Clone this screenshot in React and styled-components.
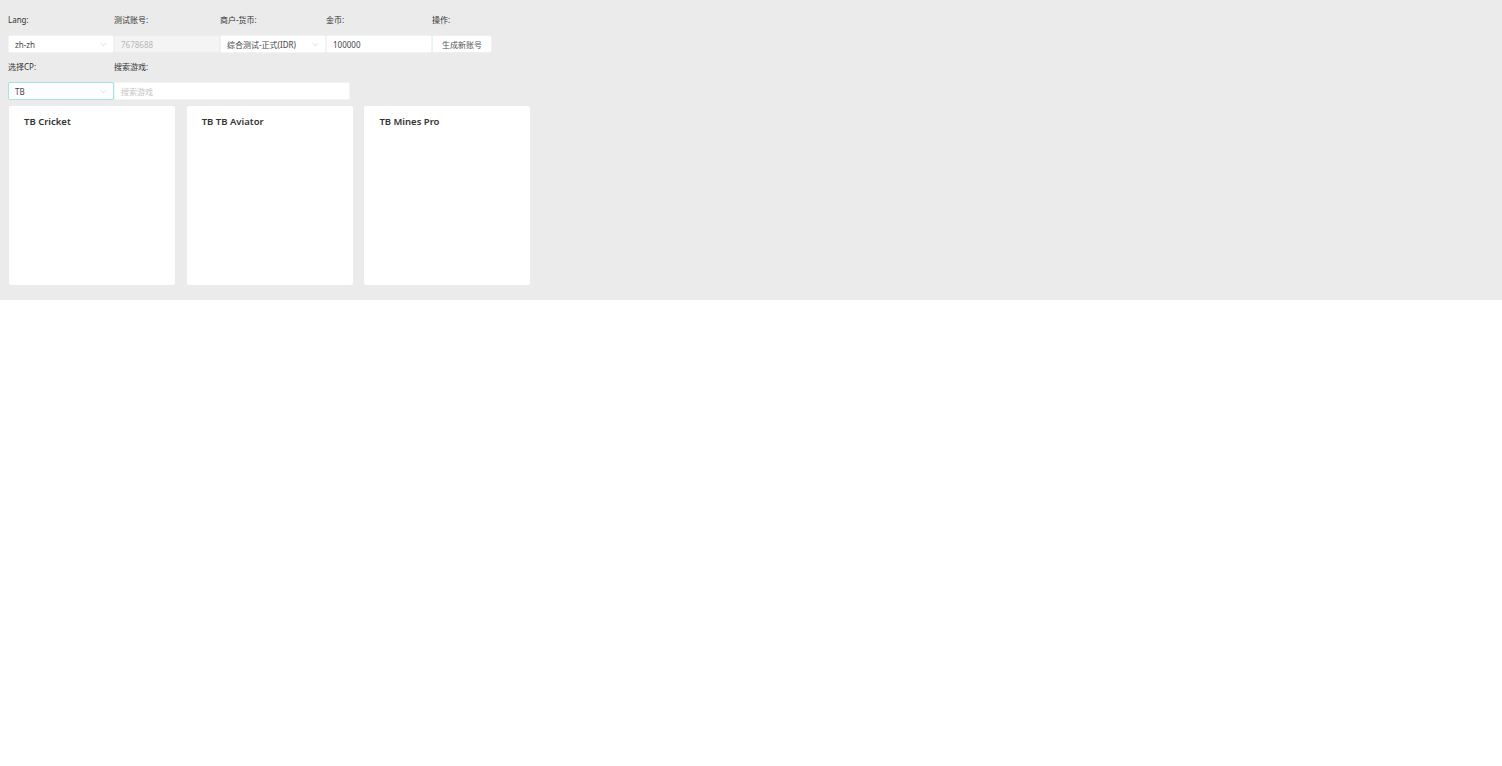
import React from 'react';
import styled, { createGlobalStyle } from 'styled-components';

const GlobalStyle = createGlobalStyle`
  html, body {
    margin: 0;
    padding: 0;
    background: #fff;
    font-family: "Segoe UI", "Noto Sans", "Noto Sans CJK SC", sans-serif;
  }
`;

const Panel = styled.div`
  background: #ebebeb;
  padding: 14px 8px 15px 8px;
`;

const FormRow = styled.div`
  display: flex;
  align-items: flex-end;
  margin-bottom: ${p => p.gap || 0}px;
`;

const Field = styled.div`
  display: flex;
  flex-direction: column;
  width: ${p => p.width}px;
`;

const Label = styled.div`
  font-size: 8px;
  line-height: 12px;
  height: 12px;
  color: #333;
  margin-bottom: 9px;
  white-space: nowrap;
`;

const Box = styled.div`
  box-sizing: border-box;
  height: 18px;
  display: flex;
  align-items: center;
  justify-content: space-between;
  padding: 0 6px 0 6px;
  background: ${p => (p.disabled ? '#f4f4f4' : '#fff')};
  border: 1px solid ${p => (p.focused ? '#a3e4de' : p.disabled ? '#ededed' : '#f3f3f3')};
  border-radius: 2px;
  font-size: 8px;
  color: ${p => (p.disabled ? '#b8b8b8' : p.placeholder ? '#c4c4c4' : '#444')};
  white-space: nowrap;
  overflow: hidden;
`;

const Chevron = styled.svg`
  width: 7px;
  height: 7px;
  flex: none;
`;

const Button = styled.button`
  box-sizing: border-box;
  height: 18px;
  width: 100%;
  background: #fff;
  border: 1px solid #f0f0f0;
  border-radius: 2px;
  font-family: inherit;
  font-size: 8px;
  color: #555;
  padding: 0;
  cursor: pointer;
`;

const Cards = styled.div`
  display: flex;
  gap: 11.7px;
  padding-left: 1px;
`;

const Card = styled.div`
  width: 166px;
  height: 179px;
  background: #fff;
  border-radius: 2px;
  box-sizing: border-box;
  padding: 9px 15px;
`;

const CardTitle = styled.div`
  font-size: 9.5px;
  font-weight: 600;
  color: #333;
`;

const Arrow = () => (
  <Chevron viewBox="0 0 10 10">
    <path d="M1.5 3.2 L5 6.8 L8.5 3.2" fill="none" stroke="#c8c8c8" strokeWidth="0.9" />
  </Chevron>
);

const games = ['TB Cricket', 'TB TB Aviator', 'TB Mines Pro'];

export default function App() {
  return (
    <>
      <GlobalStyle />
      <Panel>
        <FormRow gap={8}>
          <Field width={106}>
            <Label>Lang:</Label>
            <Box>zh-zh<Arrow /></Box>
          </Field>
          <Field width={106}>
            <Label>测试账号:</Label>
            <Box disabled>7678688</Box>
          </Field>
          <Field width={106}>
            <Label>商户-货币:</Label>
            <Box>综合测试-正式(IDR)<Arrow /></Box>
          </Field>
          <Field width={106}>
            <Label>金币:</Label>
            <Box>100000</Box>
          </Field>
          <Field width={60}>
            <Label>操作:</Label>
            <Button>生成新账号</Button>
          </Field>
        </FormRow>
        <FormRow gap={6}>
          <Field width={106}>
            <Label>选择CP:</Label>
            <Box focused>TB<Arrow /></Box>
          </Field>
          <Field width={236}>
            <Label>搜索游戏:</Label>
            <Box placeholder>搜索游戏</Box>
          </Field>
        </FormRow>
        <Cards>
          {games.map(g => (
            <Card key={g}>
              <CardTitle>{g}</CardTitle>
            </Card>
          ))}
        </Cards>
      </Panel>
    </>
  );
}
